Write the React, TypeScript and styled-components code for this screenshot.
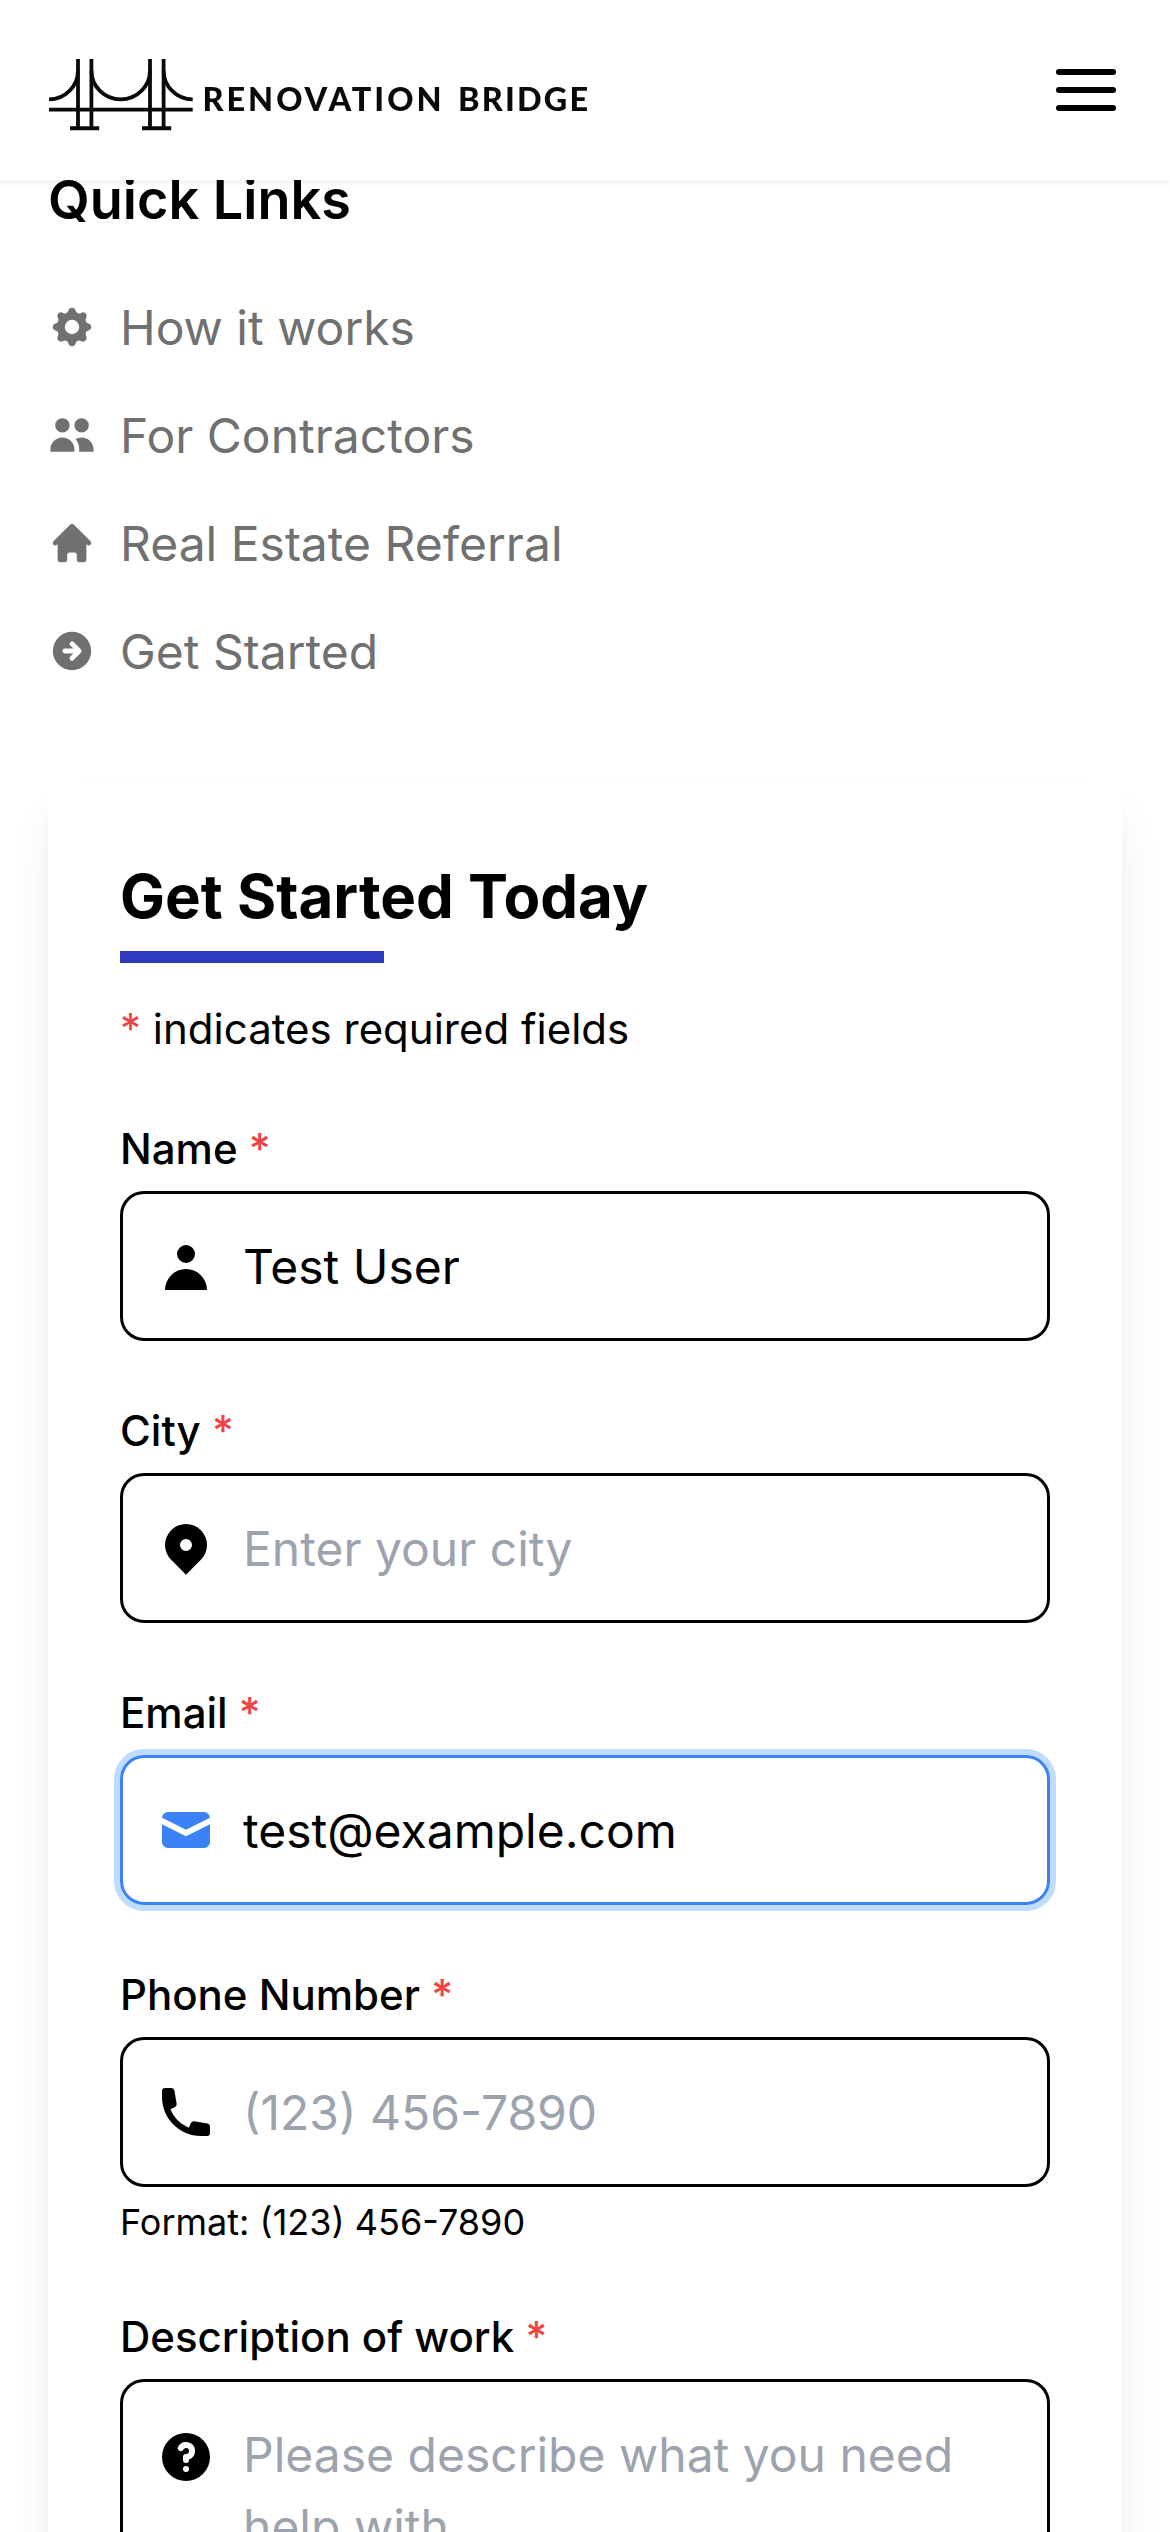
import React from "react";
import styled, { createGlobalStyle, css } from "styled-components";
import type { IconType } from "react-icons";
import {
  HiArrowCircleRight,
  HiCog,
  HiHome,
  HiLocationMarker,
  HiMail,
  HiPhone,
  HiQuestionMarkCircle,
  HiUser,
  HiUsers,
} from "react-icons/hi";

const GlobalStyle = createGlobalStyle`
  *, *::before, *::after { box-sizing: border-box; }
  body {
    margin: 0;
    background: #fff;
    color: #000;
    font-family: Inter, "Liberation Sans", sans-serif;
    -webkit-font-smoothing: antialiased;
  }
`;

const Page = styled.div`
  height: 2532px;
  overflow: hidden;
`;

const Header = styled.header`
  position: fixed;
  inset: 0 0 auto 0;
  z-index: 10;
  display: flex;
  align-items: center;
  justify-content: space-between;
  height: 180px;
  padding: 0 54px 0 48px;
  background: #fff;
  box-shadow: 0 3px 6px rgba(0, 0, 0, 0.05);
`;

const LogoSvg = styled.svg`
  display: block;
  width: 552px;
  height: 96px;
`;

const Wordmark = styled.text`
  font-family: Lato, "Liberation Sans", sans-serif;
  font-weight: 900;
  font-size: 32.4px;
  fill: #0a0a0a;
`;

const MenuButton = styled.button`
  display: flex;
  flex-direction: column;
  gap: 12px;
  width: 60px;
  padding: 0;
  border: 0;
  background: none;
`;

const MenuBar = styled.span`
  height: 6px;
  border-radius: 3px;
  background: #000;
`;

const Main = styled.main`
  display: flex;
  flex-direction: column;
  gap: 95px;
  padding: 159px 48px 0;
`;

const QuickLinks = styled.nav`
  display: flex;
  flex-direction: column;
  gap: 51px;
`;

const QuickTitle = styled.h3`
  margin: 0;
  font-size: 54px;
  font-weight: 600;
  line-height: 81px;
`;

const LinkList = styled.ul`
  display: flex;
  flex-direction: column;
  gap: 35px;
  margin: 0;
  padding: 0;
  list-style: none;
`;

const LinkItem = styled.a`
  display: flex;
  align-items: flex-start;
  gap: 24px;
  color: #707070;
  font-size: 48px;
  line-height: 73px;

  svg {
    width: 48px;
    height: 48px;
    margin-top: 12px;
  }
`;

const Card = styled.form`
  display: flex;
  flex-direction: column;
  align-items: stretch;
  gap: 60px;
  padding: 72px;
  background: #fff;
  box-shadow: 0 30px 45px -9px rgba(0, 0, 0, 0.1), 0 12px 18px -12px rgba(0, 0, 0, 0.1);
`;

const CardTitle = styled.h2`
  position: relative;
  align-self: flex-start;
  margin: 0 0 2px;
  font-size: 60px;
  font-weight: 700;
  line-height: 82px;

  &::after {
    content: "";
    position: absolute;
    left: 0;
    bottom: -26px;
    width: 50%;
    height: 12px;
    background: #2f39bd;
  }
`;

const Note = styled.p`
  margin: 0;
  font-size: 42px;
  line-height: 60px;
`;

const Star = styled.span`
  color: #ef4444;
`;

const Field = styled.div`
  display: flex;
  flex-direction: column;
  gap: 12px;
`;

const Label = styled.label`
  font-size: 42px;
  font-weight: 500;
  line-height: 60px;
`;

const Box = styled.div<{ $focused?: boolean; $tall?: boolean }>`
  display: flex;
  align-items: center;
  gap: 27px;
  height: 150px;
  padding: 0 36px 0 33px;
  border: 3px solid #000;
  border-radius: 24px;

  svg {
    flex: none;
    width: 60px;
    height: 60px;
  }

  ${(p) =>
    p.$focused &&
    css`
      border-color: #3b82f6;
      box-shadow: 0 0 0 6px #bfdbfe;
      svg {
        color: #3b82f6;
      }
    `}

  ${(p) =>
    p.$tall &&
    css`
      align-items: flex-start;
      height: 366px;
      padding-top: 36px;
      svg {
        margin-top: 9px;
      }
    `}
`;

const control = css`
  flex: 1;
  min-width: 0;
  margin: 0;
  padding: 1px 0 0;
  border: 0;
  outline: 0;
  background: transparent;
  color: #000;
  font: inherit;
  font-size: 48px;
  line-height: 72px;

  &::placeholder {
    color: #9ca3af;
    opacity: 1;
  }
`;

const Input = styled.input`
  ${control}
`;

const TextArea = styled.textarea`
  ${control}
  height: 288px;
  resize: none;
  overflow: hidden;
`;

const Hint = styled.p`
  margin: 0 0 2px;
  font-size: 36px;
  line-height: 46px;
`;

const links: { icon: IconType; label: string }[] = [
  { icon: HiCog, label: "How it works" },
  { icon: HiUsers, label: "For Contractors" },
  { icon: HiHome, label: "Real Estate Referral" },
  { icon: HiArrowCircleRight, label: "Get Started" },
];

interface FieldSpec {
  id: string;
  label: string;
  icon: IconType;
  value?: string;
  placeholder?: string;
  hint?: string;
  focused?: boolean;
  multiline?: boolean;
}

const fields: FieldSpec[] = [
  { id: "name", label: "Name", icon: HiUser, value: "Test User" },
  { id: "city", label: "City", icon: HiLocationMarker, placeholder: "Enter your city" },
  { id: "email", label: "Email", icon: HiMail, value: "test@example.com", focused: true },
  {
    id: "phone",
    label: "Phone Number",
    icon: HiPhone,
    placeholder: "(123) 456-7890",
    hint: "Format: (123) 456-7890",
  },
  {
    id: "description",
    label: "Description of work",
    icon: HiQuestionMarkCircle,
    placeholder: "Please describe what you need help with",
    multiline: true,
  },
];

function Logo() {
  return (
    <LogoSvg viewBox="48 42 552 96" role="img" aria-label="Renovation Bridge">
      <g fill="none" stroke="#0a0a0a" strokeWidth="3.8">
        <path d="M49 109.7H192.7" />
        <path d="M78 59V128M91.4 59V128M150 59V128M163.6 59V128" />
        <path d="M70 128.2H99.2M142 128.2H171.2" strokeWidth="4" />
        <path d="M49 99.4A29 29 0 0 0 78 70.4" />
        <path d="M91.4 70.4A29.3 29 0 0 0 150 70.4" />
        <path d="M163.6 70.4A29 29 0 0 0 192.7 99.4" />
      </g>
      <Wordmark x="202.5" y="110.8" textLength="239">
        RENOVATION
      </Wordmark>
      <Wordmark x="458" y="110.8" textLength="130">
        BRIDGE
      </Wordmark>
    </LogoSvg>
  );
}

function FormField({ spec }: { spec: FieldSpec }) {
  const Icon = spec.icon;
  return (
    <Field>
      <Label htmlFor={spec.id}>
        {spec.label} <Star>*</Star>
      </Label>
      <Box $focused={spec.focused} $tall={spec.multiline}>
        <Icon />
        {spec.multiline ? (
          <TextArea id={spec.id} placeholder={spec.placeholder} />
        ) : (
          <Input id={spec.id} defaultValue={spec.value} placeholder={spec.placeholder} />
        )}
      </Box>
      {spec.hint && <Hint>{spec.hint}</Hint>}
    </Field>
  );
}

export default function App() {
  return (
    <Page>
      <GlobalStyle />
      <Header>
        <Logo />
        <MenuButton aria-label="Menu">
          <MenuBar />
          <MenuBar />
          <MenuBar />
        </MenuButton>
      </Header>
      <Main>
        <QuickLinks>
          <QuickTitle>Quick Links</QuickTitle>
          <LinkList>
            {links.map(({ icon: Icon, label }) => (
              <li key={label}>
                <LinkItem>
                  <Icon />
                  {label}
                </LinkItem>
              </li>
            ))}
          </LinkList>
        </QuickLinks>
        <Card>
          <CardTitle>Get Started Today</CardTitle>
          <Note>
            <Star>*</Star> indicates required fields
          </Note>
          {fields.map((spec) => (
            <FormField key={spec.id} spec={spec} />
          ))}
        </Card>
      </Main>
    </Page>
  );
}
